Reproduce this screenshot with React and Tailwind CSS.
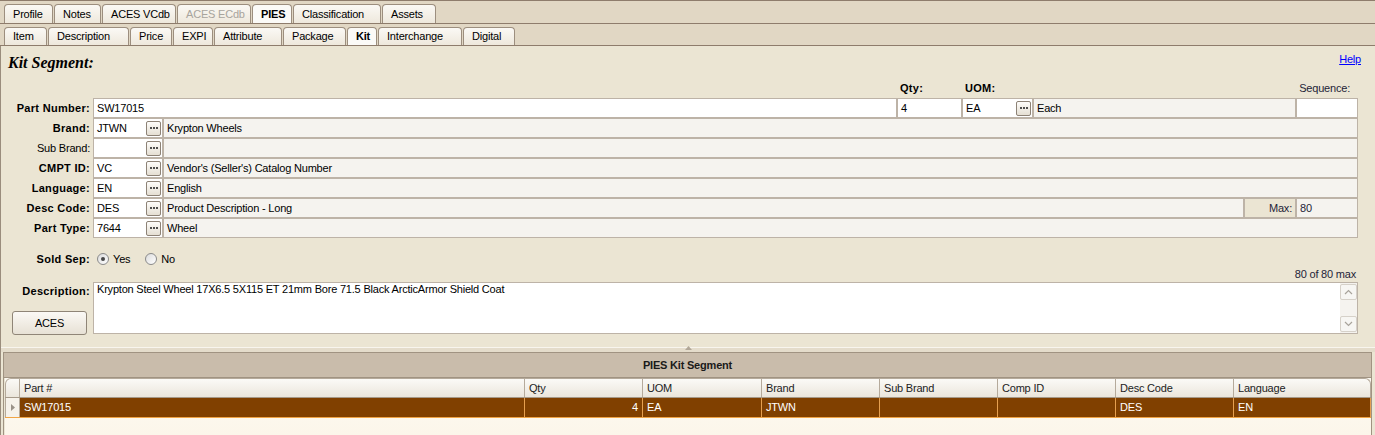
import React from "react";

const BOX = "border border-[#bdb3a7]";

const Tab = ({ label, w, h, active, disabled }) => (
  <div
    className={`${w} ${h} shrink-0 border border-b-0 border-[#9c8e7e] rounded-t-[4px] pl-[8px] flex items-center whitespace-nowrap ${
      active ? "bg-[#fbfaf7] font-bold" : "bg-gradient-to-b from-[#fbf9f5] to-[#eee8dc]"
    } ${disabled ? "text-[#a8a49d]" : "text-black"}`}
  >
    {label}
  </div>
);

const Dots = () => (
  <div className="w-[15px] h-[15px] shrink-0 border border-[#8d8276] rounded-[2px] bg-gradient-to-b from-[#fdfcfa] to-[#e5dfd3] flex items-center justify-center gap-[1px]">
    <span className="w-[2px] h-[2px] bg-[#4d4d4d]" />
    <span className="w-[2px] h-[2px] bg-[#4d4d4d]" />
    <span className="w-[2px] h-[2px] bg-[#4d4d4d]" />
  </div>
);

const Label = ({ children, bold = true }) => (
  <div
    className={`w-[92px] shrink-0 pr-[3px] text-right self-center whitespace-nowrap ${
      bold ? "font-bold tracking-[0.3px]" : ""
    }`}
  >
    {children}
  </div>
);

const CodeRow = ({ label, bold = true, code, desc, max }) => (
  <div className="flex h-[20px]">
    <Label bold={bold}>{label}</Label>
    <div className={`w-[70px] shrink-0 bg-white ${BOX} flex items-center justify-between pl-[3px] pr-[1px]`}>
      <span>{code}</span>
      <Dots />
    </div>
    <div className={`flex-1 bg-[#f5f3ef] ${BOX} pl-[3px] flex items-center`}>{desc}</div>
    {max && (
      <>
        <div className={`w-[52px] shrink-0 bg-[#ebe5d3] ${BOX} flex items-center justify-end pr-[3px] text-[#1e1e38]`}>Max:</div>
        <div className={`w-[62px] shrink-0 bg-[#f5f3ef] ${BOX} flex items-center pl-[3px] text-[#1e1e38]`}>{max}</div>
      </>
    )}
  </div>
);

const Radio = ({ checked }) => (
  <span className="w-[12px] h-[12px] rounded-full border border-[#8a8a8a] bg-gradient-to-br from-[#dcdcdc] to-[#ffffff] flex items-center justify-center shrink-0">
    {checked && <span className="w-[4px] h-[4px] rounded-full bg-[#474747]" />}
  </span>
);

const Chevron = ({ up }) => (
  <svg width="9" height="6" viewBox="0 0 9 6">
    <polyline
      points={up ? "1,5 4.5,1.5 8,5" : "1,1 4.5,4.5 8,1"}
      fill="none"
      stroke="#a8a39b"
      strokeWidth="1.2"
    />
  </svg>
);

const tabs1 = [
  { label: "Profile", w: "w-[49px]" },
  { label: "Notes", w: "w-[47px]" },
  { label: "ACES VCdb", w: "w-[74px]" },
  { label: "ACES ECdb", w: "w-[74px]", disabled: true },
  { label: "PIES", w: "w-[40px]", active: true },
  { label: "Classification", w: "w-[88px]" },
  { label: "Assets", w: "w-[54px]" },
];

const tabs2 = [
  { label: "Item", w: "w-[43px]" },
  { label: "Description", w: "w-[81px]" },
  { label: "Price", w: "w-[42px]" },
  { label: "EXPI", w: "w-[40px]" },
  { label: "Attribute", w: "w-[68px]" },
  { label: "Package", w: "w-[63px]" },
  { label: "Kit", w: "w-[30px]", active: true },
  { label: "Interchange", w: "w-[84px]" },
  { label: "Digital", w: "w-[52px]" },
];

const cols = [
  { label: "Part #", w: "w-[505px]", v: "SW17015" },
  { label: "Qty", w: "w-[118px]", v: "4", right: true },
  { label: "UOM", w: "w-[119px]", v: "EA" },
  { label: "Brand", w: "w-[118px]", v: "JTWN" },
  { label: "Sub Brand", w: "w-[118px]", v: "" },
  { label: "Comp ID", w: "w-[118px]", v: "" },
  { label: "Desc Code", w: "w-[118px]", v: "DES" },
  { label: "Language", w: "flex-1", v: "EN", last: true },
];

export default function App() {
  return (
    <div className="w-[1375px] h-[435px] overflow-hidden bg-[#ebe5d3] text-[11px] leading-[13px] tracking-[-0.2px] text-black flex flex-col font-['Liberation_Sans',Arial,sans-serif]">
      {/* top tab row */}
      <div className="h-[24px] shrink-0 bg-[#e1d7c4] border-t border-b border-[#8e7c6c] flex items-end pl-[4px] gap-[1px]">
        {tabs1.map((t) => (
          <Tab key={t.label} {...t} h="h-[19px]" />
        ))}
      </div>
      {/* second tab row */}
      <div className="h-[22px] shrink-0 bg-[#e1d7c4] border-b border-[#8e7c6c] flex items-end pl-[4px] gap-[1px]">
        {tabs2.map((t) => (
          <Tab key={t.label} {...t} h="h-[18px]" />
        ))}
      </div>

      {/* content */}
      <div className="flex-1 flex flex-col border-l border-[#9a8d7d] min-h-0">
        <div className="h-[301px] shrink-0 flex flex-col">
          {/* title */}
          <div className="h-[32px] shrink-0 flex items-start justify-between pt-[8px] pl-[7px] pr-[14px]">
            <div className="font-['Liberation_Serif',serif] font-bold italic text-[16px] leading-[17px] tracking-normal">Kit Segment:</div>
            <a className="text-[#0000ff] underline mt-[-1px]">Help</a>
          </div>

          <div className="w-[1357px] flex flex-col">
            {/* header labels */}
            <div className="h-[20px] flex items-end pb-[3px]">
              <div className="w-[896px] shrink-0" />
              <div className="w-[65px] shrink-0 pl-[3px] font-bold tracking-[0.3px]">Qty:</div>
              <div className="w-[71px] shrink-0 pl-[3px] font-bold tracking-[0.3px]">UOM:</div>
              <div className="flex-1" />
              <div className="w-[62px] shrink-0 text-right pr-[8px] text-[#1e1e38]">Sequence:</div>
            </div>

            {/* part number row */}
            <div className="flex h-[20px]">
              <Label>Part Number:</Label>
              <div className={`w-[804px] shrink-0 bg-white ${BOX} pl-[3px] flex items-center`}>SW17015</div>
              <div className={`w-[65px] shrink-0 bg-white ${BOX} pl-[3px] flex items-center`}>4</div>
              <div className={`w-[71px] shrink-0 bg-white ${BOX} pl-[3px] pr-[1px] flex items-center justify-between`}>
                <span>EA</span>
                <Dots />
              </div>
              <div className={`flex-1 bg-[#f5f3ef] ${BOX} pl-[3px] flex items-center`}>Each</div>
              <div className={`w-[62px] shrink-0 bg-white ${BOX}`} />
            </div>

            <CodeRow label="Brand:" code="JTWN" desc="Krypton Wheels" />
            <CodeRow label="Sub Brand:" bold={false} code="" desc="" />
            <CodeRow label="CMPT ID:" code="VC" desc="Vendor's (Seller's) Catalog Number" />
            <CodeRow label="Language:" code="EN" desc="English" />
            <CodeRow label="Desc Code:" code="DES" desc="Product Description - Long" max="80" />
            <CodeRow label="Part Type:" code="7644" desc="Wheel" />

            {/* sold sep */}
            <div className="flex h-[18px] mt-[12px] items-center">
              <Label>Sold Sep:</Label>
              <div className="flex items-center ml-[4px]">
                <Radio checked />
                <span className="ml-[4px]">Yes</span>
                <span className="ml-[15px]">
                  <Radio />
                </span>
                <span className="ml-[4px]">No</span>
              </div>
            </div>

            {/* counter */}
            <div className="h-[12px] flex items-center justify-end pr-[2px] text-[#1e1e38]">80 of 80 max</div>

            {/* description */}
            <div className="flex h-[53px] mt-[2px]">
              <div className="w-[92px] shrink-0 flex flex-col">
                <div className="pr-[3px] text-right font-bold tracking-[0.3px] pt-[3px]">Description:</div>
                <div className="mt-auto ml-[11px] w-[75px] h-[24px] border border-[#8f8577] rounded-[3px] bg-gradient-to-b from-[#fbf9f5] to-[#e7e1d5] flex items-center justify-center">
                  ACES
                </div>
              </div>
              <div className={`flex-1 h-[52px] bg-white ${BOX} flex`}>
                <div className="flex-1 pl-[3px] pt-[0px]">
                  Krypton Steel Wheel 17X6.5 5X115 ET 21mm Bore 71.5 Black ArcticArmor Shield Coat
                </div>
                <div className="w-[17px] shrink-0 bg-[#f5f3ef] flex flex-col justify-between py-[1px]">
                  <div className="h-[16px] border border-[#d6d1c9] rounded-[2px] bg-[#f7f6f3] flex items-center justify-center">
                    <Chevron up />
                  </div>
                  <div className="h-[16px] border border-[#d6d1c9] rounded-[2px] bg-[#f7f6f3] flex items-center justify-center">
                    <Chevron />
                  </div>
                </div>
              </div>
            </div>
          </div>
        </div>

        {/* splitter */}
        <div className="h-[5px] shrink-0 border-t border-[#f8f5ee] bg-[#e4dccb] relative">
          <svg className="absolute left-[684px] top-[-2px]" width="7" height="4" viewBox="0 0 7 4">
            <polygon points="0,4 3.5,0 7,4" fill="#b1a798" />
          </svg>
        </div>

        {/* bottom panel */}
        <div className="flex-1 ml-[2px] mr-[3px] border border-b-0 border-[#a09382] flex flex-col min-h-0">
          <div className="h-[25px] shrink-0 bg-[#c9bcab] border-b border-[#a09382] flex items-center justify-center font-bold text-[#1a1a1a]">
            PIES Kit Segment
          </div>
          <div className="flex-1 flex flex-col bg-gradient-to-b from-[#fdfaf3] to-[#fcf6ea] ml-[1px]">
            {/* header */}
            <div className="h-[20px] shrink-0 flex border-b border-[#a69a8a]">
              <div className="w-[15px] shrink-0 border-r border-l border-t border-[#b5aa9b] rounded-tl-[6px] bg-gradient-to-b from-[#fbfaf7] to-[#ebe6dc]" />
              {cols.map((c) => (
                <div
                  key={c.label}
                  className={`${c.w} shrink-0 border-t border-[#b5aa9b] ${
                    c.last ? "border-r rounded-tr-[6px]" : "border-r"
                  } bg-gradient-to-b from-[#fbfaf7] to-[#ebe6dc] flex items-center pl-[4px] text-[#222]`}
                >
                  {c.label}
                </div>
              ))}
            </div>
            {/* data row */}
            <div className="h-[20px] shrink-0 flex border-b border-[#f0a445]">
              <div className="w-[15px] shrink-0 border-l border-r border-[#b5aa9b] bg-[#f6f2ea] flex items-center justify-center">
                <svg width="4" height="7" viewBox="0 0 4 7">
                  <polygon points="0,0 4,3.5 0,7" fill="#9a9288" />
                </svg>
              </div>
              {cols.map((c) => (
                <div
                  key={c.label}
                  className={`${c.w} shrink-0 bg-[#804000] border-r border-[#e6a050] flex items-center text-white ${
                    c.right ? "justify-end pr-[4px]" : "pl-[4px]"
                  }`}
                >
                  {c.v}
                </div>
              ))}
            </div>
          </div>
        </div>
      </div>
    </div>
  );
}
